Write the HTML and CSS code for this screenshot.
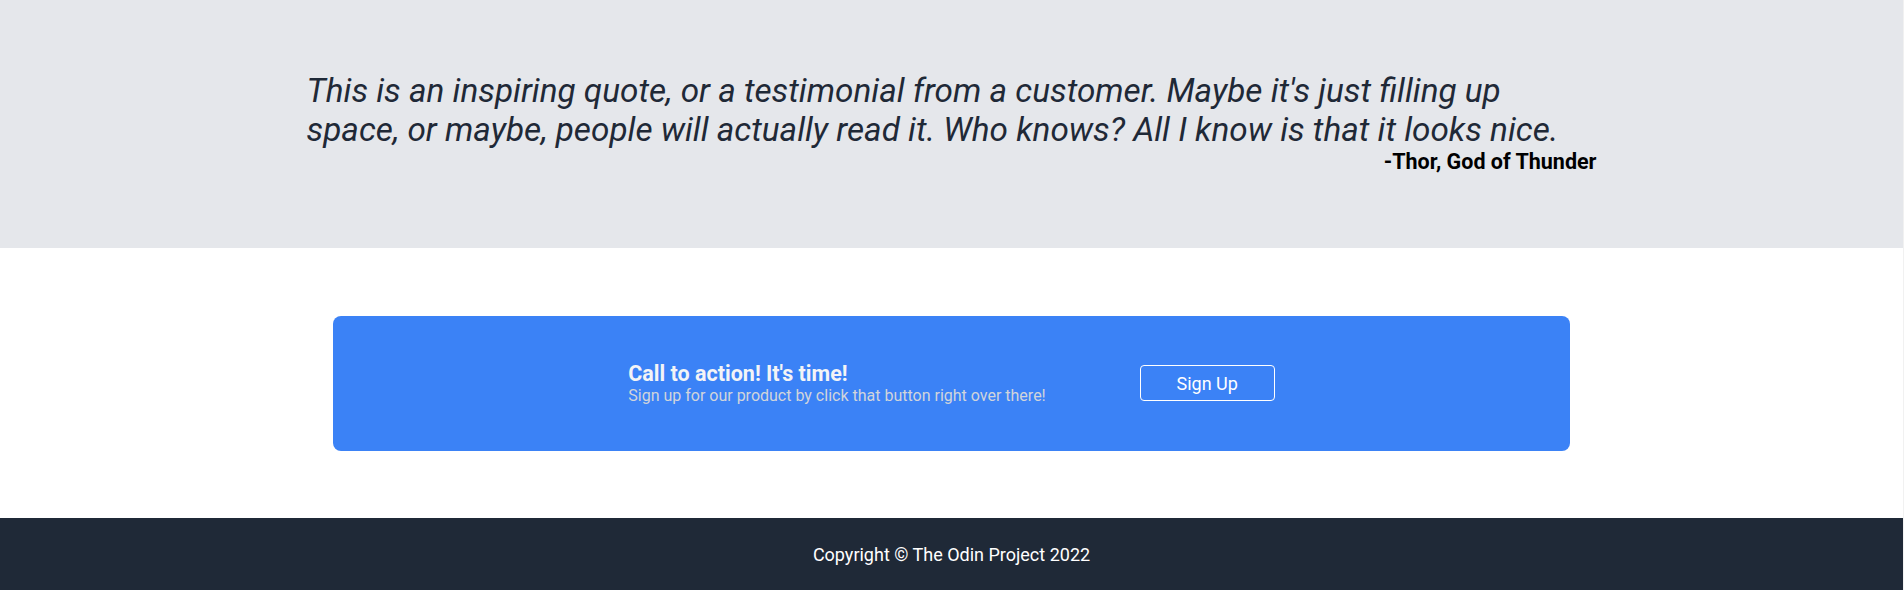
FILE: index.html
```html
<!DOCTYPE html>
<html lang="en">
<head>
<meta charset="utf-8">
<title>Landing</title>
<link rel="stylesheet" href="styles.css">
</head>
<body>
  <section class="quote-section">
    <div class="quote-wrap">
      <p class="quote">This is an inspiring quote, or a testimonial from a customer. Maybe it's just filling up space, or maybe, people will actually read it. Who knows? All I know is that it looks nice.</p>
      <p class="author">-Thor, God of Thunder</p>
    </div>
  </section>
  <section class="cta-section">
    <div class="cta-card">
      <div class="cta-text">
        <h2 class="cta-title">Call to action! It's time!</h2>
        <p class="cta-sub">Sign up for our product by click that button right over there!</p>
      </div>
      <button class="cta-button" type="button">Sign Up</button>
    </div>
  </section>
  <footer class="footer">Copyright © The Odin Project 2022</footer>
</body>
</html>
```
FILE: styles.css
```css
html {
  background: #f1f1f1;
}
body {
  margin: 0 1px 0 0;
  background: #ffffff;
  font-family: Roboto, "Liberation Sans", sans-serif;
}
.quote-section {
  background: #e5e7eb;
  padding: 72px 0 73.4px;
}
.quote-wrap {
  width: 1290px;
  margin: 0 auto;
}
.quote {
  margin: 0;
  padding-right: 10px;
  font-size: 33.3px;
  line-height: 38.7px;
  font-style: italic;
  font-weight: 400;
  color: #1f2937;
}
.author {
  margin: 0;
  text-align: right;
  font-size: 21.5px;
  font-weight: 700;
  color: #000000;
}
.cta-section {
  padding: 68px 0 67px;
}
.cta-card {
  width: 65%;
  height: 135px;
  margin: 0 auto;
  background: #3b82f6;
  border-radius: 8px;
  display: flex;
  align-items: center;
  justify-content: center;
  gap: 94px;
}
.cta-title {
  margin: 0;
  font-size: 21.5px;
  font-weight: 700;
  color: #f3f4f6;
}
.cta-sub {
  margin: 0;
  font-size: 16px;
  color: #d1d5db;
}
.cta-button {
  width: 135px;
  height: 36px;
  background: transparent;
  border: 1px solid #ffffff;
  border-radius: 4px;
  color: #ffffff;
  font-family: Roboto, "Liberation Sans", sans-serif;
  font-size: 18px;
}
.footer {
  background: #1f2937;
  color: #ffffff;
  text-align: center;
  font-size: 18px;
  padding: 26px 0 25px;
}
```
